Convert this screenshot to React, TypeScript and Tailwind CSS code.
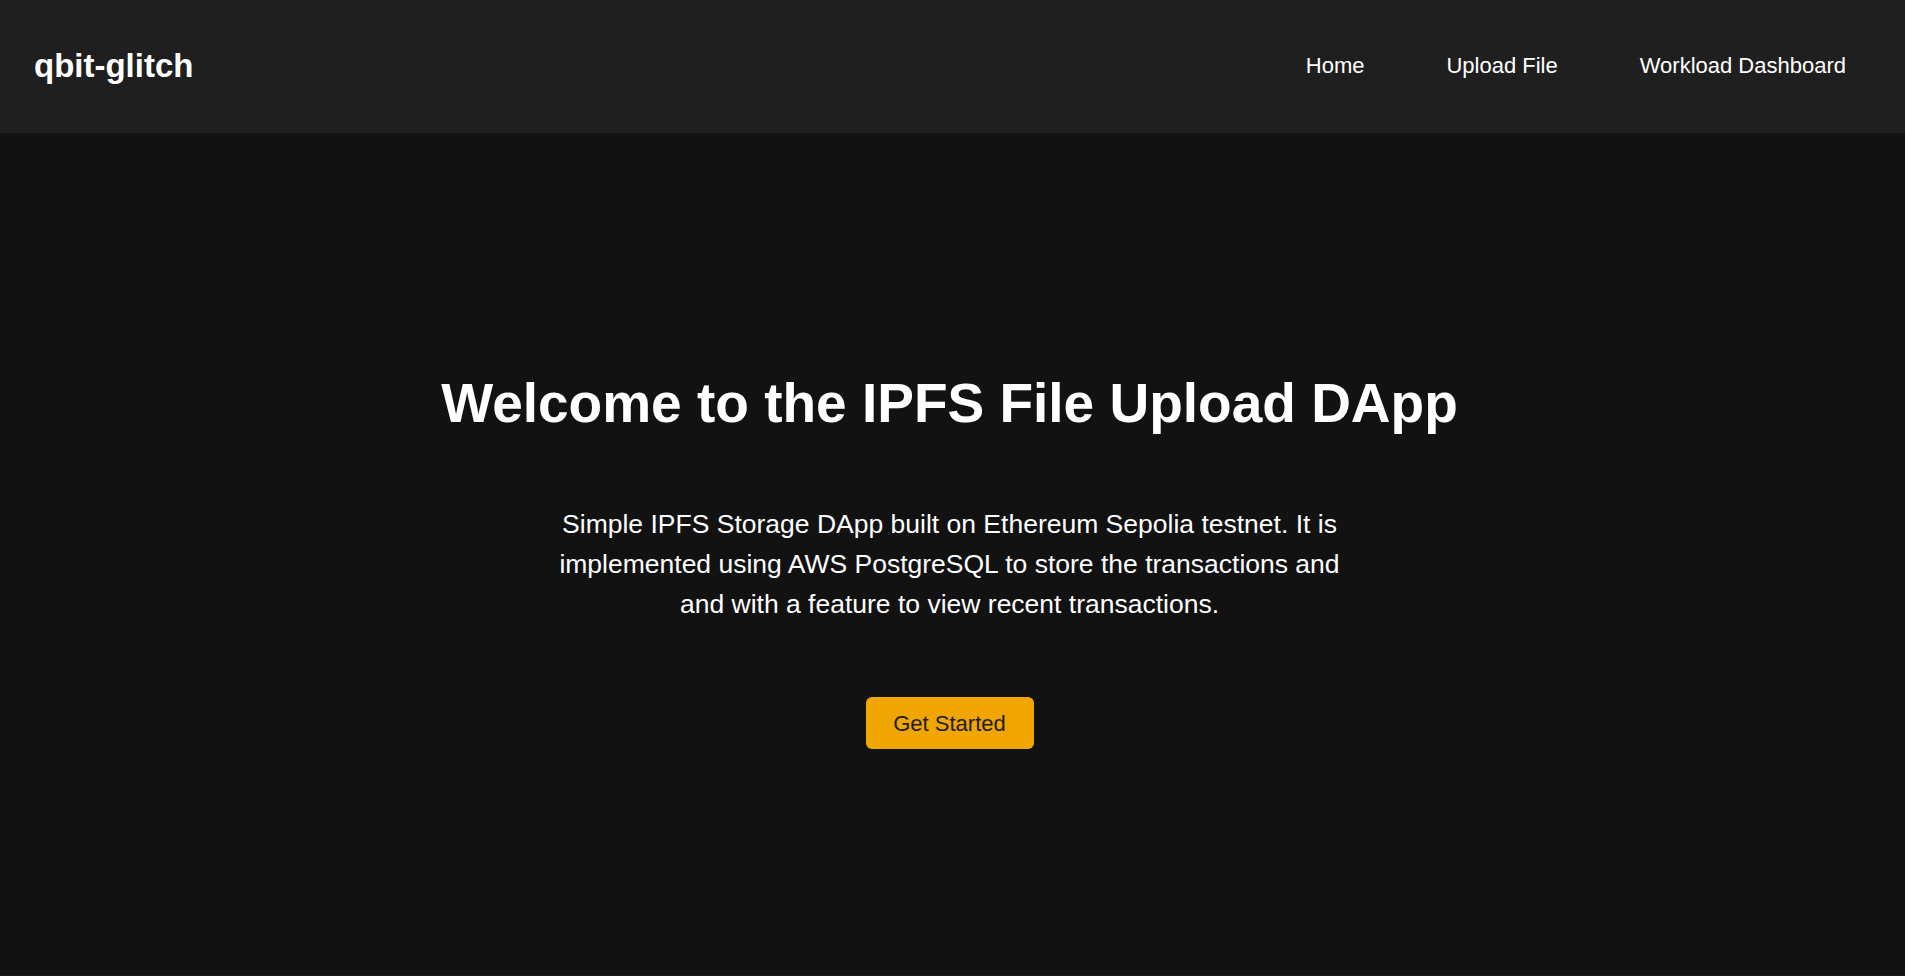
import React from "react";

export default function App() {
  return (
    <div
      className="h-screen w-full bg-[#121212] text-white flex flex-col overflow-hidden"
      style={{ fontFamily: '"Liberation Sans", Arial, sans-serif' }}
    >
      <header className="h-[133px] shrink-0 bg-[#1f1f1f] flex items-center justify-between pl-[34px] pr-[59px]">
        <div className="text-[33px] font-bold leading-[37px] -mt-[3px]">qbit-glitch</div>
        <nav className="flex items-center gap-[82px] text-[22px] leading-[25px] -mt-[3px]">
          <a className="text-white">Home</a>
          <a className="text-white">Upload File</a>
          <a className="text-white">Workload Dashboard</a>
        </nav>
      </header>
      <main className="flex-1 flex flex-col items-center pt-[239px] pr-[6px] text-center">
        <h1 className="text-[55px] font-bold leading-[63px]">
          Welcome to the IPFS File Upload DApp
        </h1>
        <p className="mt-[69px] max-w-[800px] text-[26.5px] leading-[40px]">
          Simple IPFS Storage DApp built on Ethereum Sepolia testnet. It is
          implemented using AWS PostgreSQL to store the transactions and and
          with a feature to view recent transactions.
        </p>
        <button className="mt-[73px] w-[168px] h-[52px] rounded-[6px] bg-[#f0a500] text-[#1e1e1e] text-[22px] leading-[25px] flex items-center justify-center">
          Get Started
        </button>
      </main>
      <div className="h-[1px] shrink-0 bg-[#1c1c1c]" />
    </div>
  );
}
